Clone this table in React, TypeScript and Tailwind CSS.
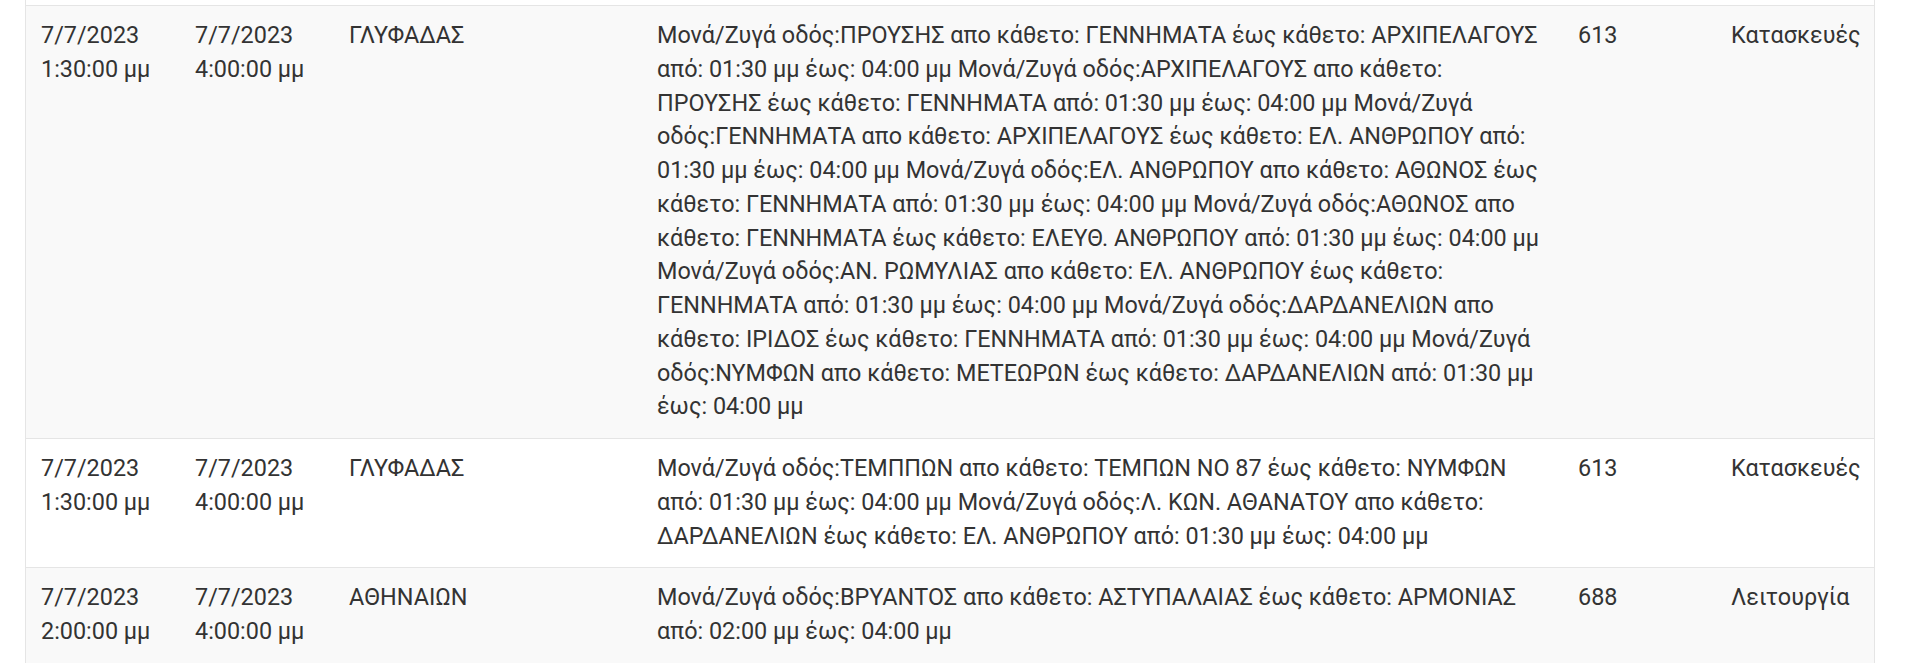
import React from "react";

interface Closure {
  id: number;
  from: [string, string];
  to: [string, string];
  area: string;
  description: string;
  code: string;
  reason: string;
}

const closures: Closure[] = [
  {
    id: 1,
    from: ["7/7/2023", "1:30:00 μμ"],
    to: ["7/7/2023", "4:00:00 μμ"],
    area: "ΓΛΥΦΑΔΑΣ",
    description:
      "Μονά/Ζυγά οδός:ΠΡΟΥΣΗΣ απο κάθετο: ΓΕΝΝΗΜΑΤΑ έως κάθετο: ΑΡΧΙΠΕΛΑΓΟΥΣ από: 01:30 μμ έως: 04:00 μμ Μονά/Ζυγά οδός:ΑΡΧΙΠΕΛΑΓΟΥΣ απο κάθετο: ΠΡΟΥΣΗΣ έως κάθετο: ΓΕΝΝΗΜΑΤΑ από: 01:30 μμ έως: 04:00 μμ Μονά/Ζυγά οδός:ΓΕΝΝΗΜΑΤΑ απο κάθετο: ΑΡΧΙΠΕΛΑΓΟΥΣ έως κάθετο: ΕΛ. ΑΝΘΡΩΠΟΥ από: 01:30 μμ έως: 04:00 μμ Μονά/Ζυγά οδός:ΕΛ. ΑΝΘΡΩΠΟΥ απο κάθετο: ΑΘΩΝΟΣ έως κάθετο: ΓΕΝΝΗΜΑΤΑ από: 01:30 μμ έως: 04:00 μμ Μονά/Ζυγά οδός:ΑΘΩΝΟΣ απο κάθετο: ΓΕΝΝΗΜΑΤΑ έως κάθετο: ΕΛΕΥΘ. ΑΝΘΡΩΠΟΥ από: 01:30 μμ έως: 04:00 μμ Μονά/Ζυγά οδός:ΑΝ. ΡΩΜΥΛΙΑΣ απο κάθετο: ΕΛ. ΑΝΘΡΩΠΟΥ έως κάθετο: ΓΕΝΝΗΜΑΤΑ από: 01:30 μμ έως: 04:00 μμ Μονά/Ζυγά οδός:ΔΑΡΔΑΝΕΛΙΩΝ απο κάθετο: ΙΡΙΔΟΣ έως κάθετο: ΓΕΝΝΗΜΑΤΑ από: 01:30 μμ έως: 04:00 μμ Μονά/Ζυγά οδός:ΝΥΜΦΩΝ απο κάθετο: ΜΕΤΕΩΡΩΝ έως κάθετο: ΔΑΡΔΑΝΕΛΙΩΝ από: 01:30 μμ έως: 04:00 μμ",
    code: "613",
    reason: "Κατασκευές",
  },
  {
    id: 2,
    from: ["7/7/2023", "1:30:00 μμ"],
    to: ["7/7/2023", "4:00:00 μμ"],
    area: "ΓΛΥΦΑΔΑΣ",
    description:
      "Μονά/Ζυγά οδός:ΤΕΜΠΠΩΝ απο κάθετο: ΤΕΜΠΩΝ ΝΟ 87 έως κάθετο: ΝΥΜΦΩΝ από: 01:30 μμ έως: 04:00 μμ Μονά/Ζυγά οδός:Λ. ΚΩΝ. ΑΘΑΝΑΤΟΥ απο κάθετο: ΔΑΡΔΑΝΕΛΙΩΝ έως κάθετο: ΕΛ. ΑΝΘΡΩΠΟΥ από: 01:30 μμ έως: 04:00 μμ",
    code: "613",
    reason: "Κατασκευές",
  },
  {
    id: 3,
    from: ["7/7/2023", "2:00:00 μμ"],
    to: ["7/7/2023", "4:00:00 μμ"],
    area: "ΑΘΗΝΑΙΩΝ",
    description:
      "Μονά/Ζυγά οδός:ΒΡΥΑΝΤΟΣ απο κάθετο: ΑΣΤΥΠΑΛΑΙΑΣ έως κάθετο: ΑΡΜΟΝΙΑΣ από: 02:00 μμ έως: 04:00 μμ",
    code: "688",
    reason: "Λειτουργία",
  },
];

const cell = "align-top px-[15px] pt-[13px] pb-[14px]";

const App = () => {
  return (
    <div className="min-h-screen bg-white pl-[25px] pr-[45px] font-['Roboto',sans-serif] text-[23.4px] leading-[33.75px] text-[#333]">
      <div className="border-x border-[#e5e5e5]">
        {/* tail of the previous (white) row */}
        <div className="h-[5px] bg-white"></div>
        <table className="w-full table-fixed border-collapse">
          <colgroup>
            <col className="w-[154px]" />
            <col className="w-[154px]" />
            <col className="w-[308px]" />
            <col className="w-[921px]" />
            <col className="w-[153px]" />
            <col />
          </colgroup>
          <tbody>
            {closures.map((row, i) => (
              <tr
                key={row.id}
                className={`border-t border-[#e5e5e5] ${i % 2 === 0 ? "bg-[#f9f9f9]" : "bg-white"}`}
              >
                <td className={cell}>
                  {row.from[0]}
                  <br />
                  {row.from[1]}
                </td>
                <td className={cell}>
                  {row.to[0]}
                  <br />
                  {row.to[1]}
                </td>
                <td className={cell}>{row.area}</td>
                <td className={cell}>{row.description}</td>
                <td className={cell}>{row.code}</td>
                <td className={cell}>{row.reason}</td>
              </tr>
            ))}
          </tbody>
        </table>
      </div>
    </div>
  );
};

export default App;
